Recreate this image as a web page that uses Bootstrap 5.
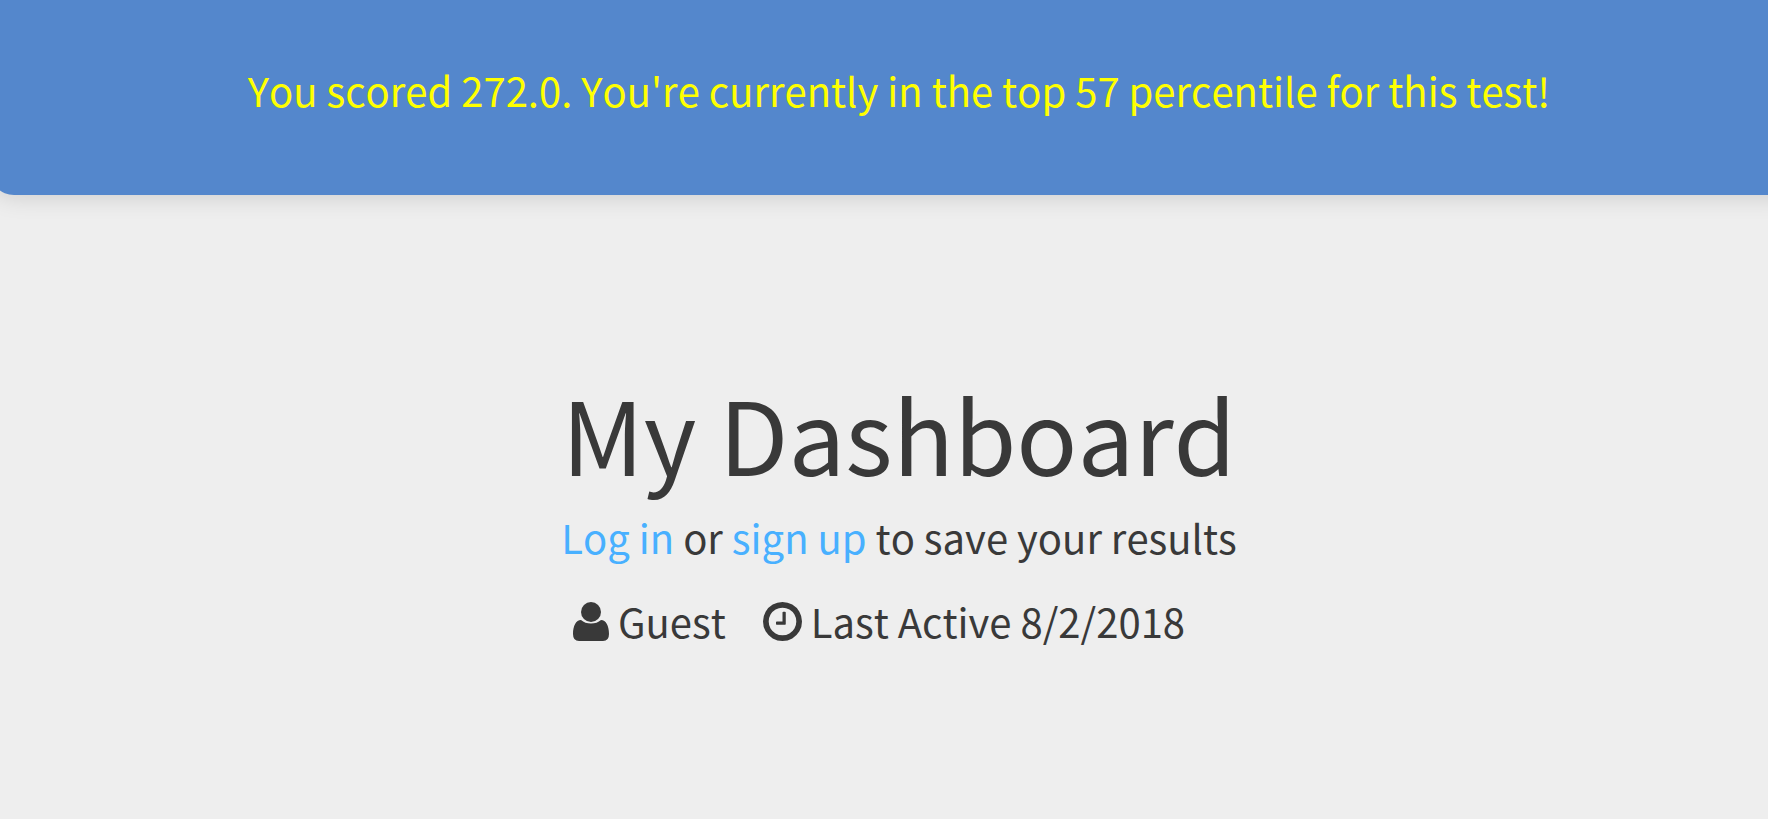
<!DOCTYPE html>
<html lang="en">
<head>
<meta charset="utf-8">
<meta name="viewport" content="width=device-width, initial-scale=1">
<title>My Dashboard</title>
<link href="https://cdn.jsdelivr.net/npm/bootstrap@5.3.0/dist/css/bootstrap.min.css" rel="stylesheet">
<style>
  body { background: #eee; color: #393939; font-family: "Noto Sans CJK SC", "Noto Sans", sans-serif; font-size: 40px; line-height: 60px; font-kerning: none; overflow-x: hidden; }
  .page-shell { margin: 0 -40px 0 -10px; }
  .score-banner { background: #5487cc; color: #ff0; border-radius: 0 0 24px 24px; box-shadow: 0 0 26px rgba(0, 0, 0, .16); padding: 60px 16px 75px; }
  .dashboard-title { font-size: 101px; line-height: 150px; font-weight: 400; }
  .dashboard { padding-top: 162px; }
  .dashboard a { color: #48b0ff; text-decoration: none; }
  .meta-row { padding: 24px 40px 0 0; gap: 37px; }
  .meta-item { gap: 9px; }
</style>
</head>
<body>
<div class="page-shell text-center">
  <header class="score-banner">
    <p class="mb-0">You scored 272.0. You're currently in the top 57 percentile for this test!</p>
  </header>
  <main class="dashboard">
    <h1 class="dashboard-title mb-0">My Dashboard</h1>
    <p class="mb-0"><a href="#login">Log in</a> or <a href="#signup">sign up</a> to save your results</p>
    <div class="meta-row d-flex justify-content-center">
      <div class="meta-item d-flex align-items-center">
        <svg width="36" height="39" viewBox="0 0 36 39" fill="currentColor" aria-hidden="true"><circle cx="18" cy="10" r="10"/><path d="M8 18C3 18 0 24 0 32q0 7 6 7h24q6 0 6-7c0-8-3-14-8-14q-4 3.500-10 3.500T8 18z"/></svg>
        <span>Guest</span>
      </div>
      <div class="meta-item d-flex align-items-center">
        <svg width="39" height="39" viewBox="128 128 1536 1536" fill="currentColor" aria-hidden="true"><path d="M1024 544v448q0 14-9 23t-23 9h-320q-14 0-23-9t-9-23v-64q0-14 9-23t23-9h224v-352q0-14 9-23t23-9h64q14 0 23 9t9 23zm416 352q0-148-73-273t-198-198-273-73-273 73-198 198-73 273 73 273 198 198 273 73 273-73 198-198 73-273zm224 0q0 209-103 385.500t-279.500 279.500-385.500 103-385.500-103-279.500-279.500-103-385.500 103-385.500 279.500-279.500 385.500-103 385.500 103 279.500 279.500 103 385.500z"/></svg>
        <span>Last Active 8/2/2018</span>
      </div>
    </div>
  </main>
</div>
<script src="https://cdn.jsdelivr.net/npm/bootstrap@5.3.0/dist/js/bootstrap.bundle.min.js"></script>
</body>
</html>
